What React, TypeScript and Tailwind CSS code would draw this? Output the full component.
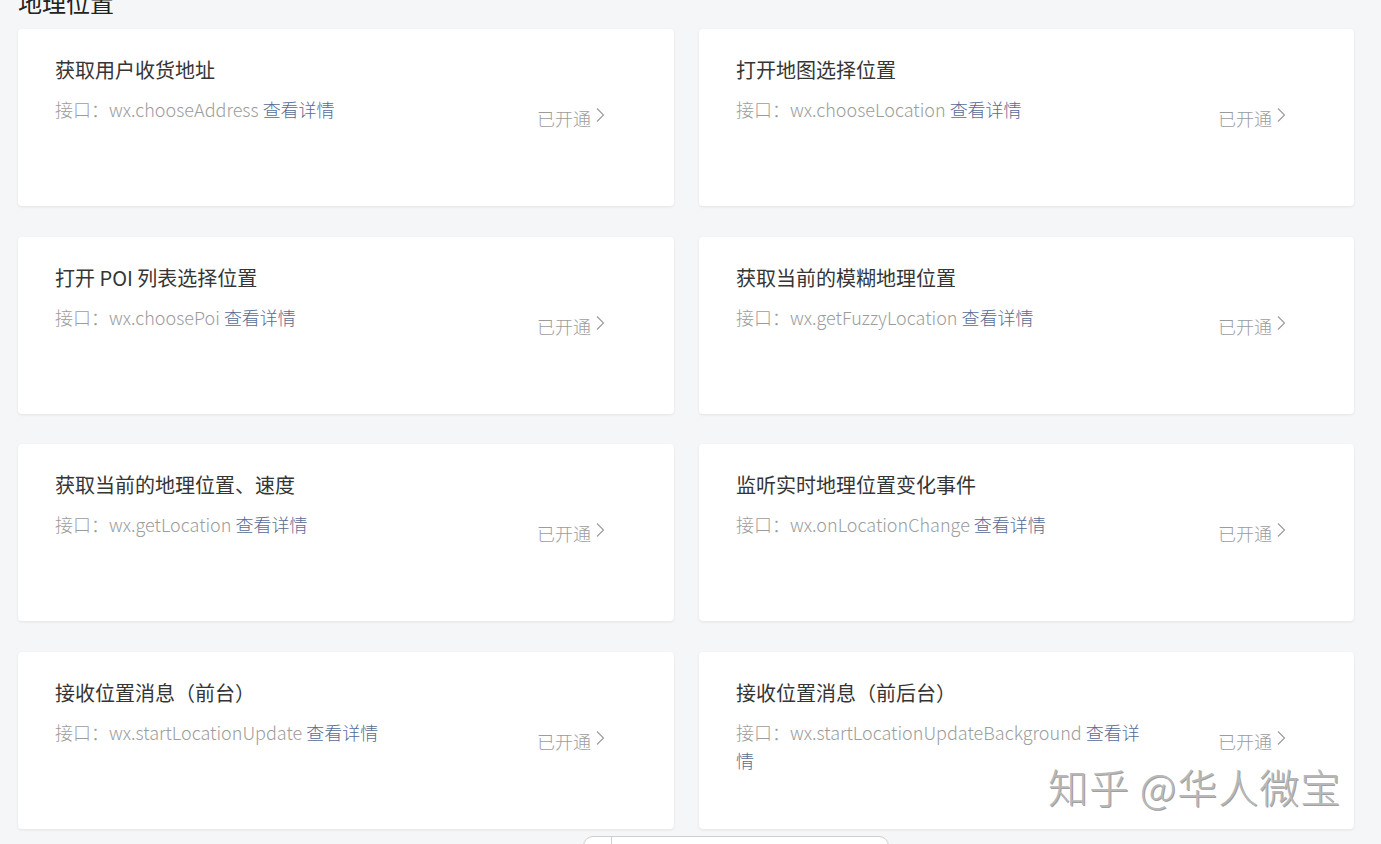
import React from "react";

type Item = { title: string; api: string };

const items: Item[] = [
  { title: "获取用户收货地址", api: "wx.chooseAddress" },
  { title: "打开地图选择位置", api: "wx.chooseLocation" },
  { title: "打开 POI 列表选择位置", api: "wx.choosePoi" },
  { title: "获取当前的模糊地理位置", api: "wx.getFuzzyLocation" },
  { title: "获取当前的地理位置、速度", api: "wx.getLocation" },
  { title: "监听实时地理位置变化事件", api: "wx.onLocationChange" },
  { title: "接收位置消息（前台）", api: "wx.startLocationUpdate" },
  { title: "接收位置消息（前后台）", api: "wx.startLocationUpdateBackground" },
];

function Chevron() {
  return (
    <svg width="10" height="16" viewBox="0 0 10 16" className="ml-[4px] -mt-[6px]">
      <polyline points="2,1.5 8.5,8 2,14.5" fill="none" stroke="#9a9a9a" strokeWidth="1.1" />
    </svg>
  );
}

function Card({ item }: { item: Item }) {
  return (
    <div className="h-[177px] rounded-[4px] bg-white shadow-[0_1px_3px_rgba(0,0,0,0.08)] flex pl-[37px] pt-[27px]">
      <div className="w-[418px] shrink-0">
        <div className="text-[20px] leading-[28px] text-[#353535] font-normal">{item.title}</div>
        <div className="mt-[11px] text-[18px] leading-[28px] text-[#9c9c9c]">
          接口：{item.api} <span className="text-[#576b95]">查看详情</span>
        </div>
      </div>
      <div className="ml-[64px] mt-[48px] h-[28px] flex items-center text-[18px] leading-[28px] text-[#9c9c9c]">
        已开通
        <Chevron />
      </div>
    </div>
  );
}

export default function App() {
  return (
    <div
      className="relative h-[844px] overflow-hidden bg-[#f5f6f8] px-[18px] font-light"
      style={{ fontFamily: '"Noto Sans CJK SC", "Noto Sans", sans-serif' }}
    >
      <div className="-mt-[10px] mb-[15px] text-[24px] leading-[24px] text-[#222] font-normal">地理位置</div>
      <div className="grid grid-cols-[656px_655px] gap-x-[25px] gap-y-[30.5px]">
        {items.map((it) => (
          <Card key={it.api} item={it} />
        ))}
      </div>
      <div
        className="absolute left-[1048px] top-[762px] text-[40px] leading-[48px] text-[#b8b8b8] tracking-[1px]"
        style={{ textShadow: "1px 1px 0 #a0a0a0, -1px -1px 0 #ffffff" }}
      >
        知乎 @华人微宝
      </div>
      <div className="absolute left-[583px] top-[836px] w-[306px] h-[20px] rounded-t-[10px] border border-[#cfcfcf] bg-white flex">
        <div className="w-[28px] border-r border-[#cfcfcf]" />
      </div>
    </div>
  );
}
